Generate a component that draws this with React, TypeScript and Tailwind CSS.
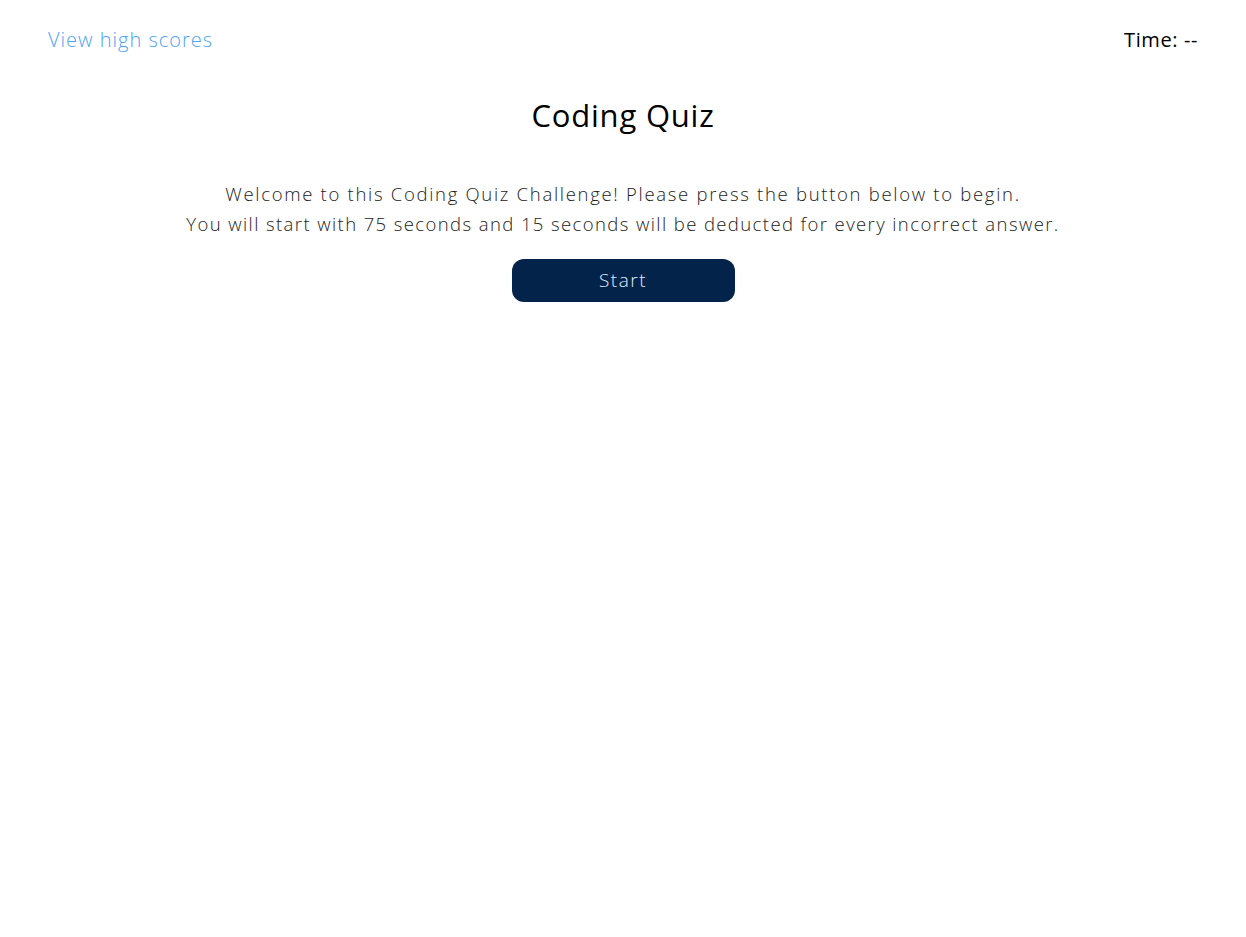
export default function App() {
  return (
    <div className="min-h-screen bg-white font-['Open_Sans',sans-serif]">
      <header className="flex items-center justify-between px-12 pt-[26px]">
        <a href="#" className="text-[20px] font-light leading-[28px] text-[#4ea3f5] tracking-[1px]">
          View high scores
        </a>
        <div className="text-[20px] leading-[28px] text-black tracking-[0.6px]">Time: --</div>
      </header>

      <main className="flex flex-col items-center">
        <h1 className="mt-[41px] text-[31px] leading-[40px] text-black tracking-[0.8px]">Coding Quiz</h1>
        <div className="mt-[44px] text-center text-[18.5px] font-light leading-[30px] text-[#222]">
          <p className="tracking-[1.7px]">Welcome to this Coding Quiz Challenge! Please press the button below to begin.</p>
          <p className="tracking-[1.4px]">You will start with 75 seconds and 15 seconds will be deducted for every incorrect answer.</p>
        </div>
        <button className="mt-[20px] h-[43px] w-[223px] rounded-[12px] bg-[#04234b] text-[19px] font-light text-[#e0efff] tracking-[1.5px]">
          Start
        </button>
      </main>
    </div>
  );
}
